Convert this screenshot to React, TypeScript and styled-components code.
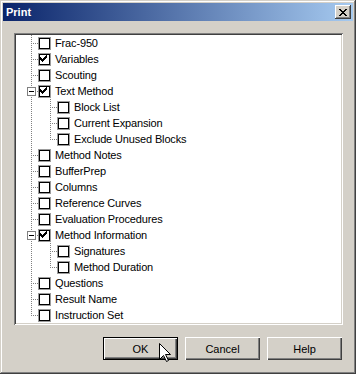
import React from "react";
import styled, { createGlobalStyle } from "styled-components";

const Global = createGlobalStyle`
  html, body { margin: 0; padding: 0; background: #d4d0c8; }
  body { font-family: "Liberation Sans", Arial, sans-serif; font-size: 11px; }
  * { box-sizing: border-box; }
`;

const FACE = "#d4d0c8";

const Window = styled.div`
  width: 356px;
  height: 374px;
  padding: 3px;
  background: ${FACE};
  display: flex;
  flex-direction: column;
  box-shadow: inset -1px -1px #404040, inset 1px 1px ${FACE},
    inset -2px -2px #808080, inset 2px 2px #ffffff;
`;

const TitleBar = styled.div`
  height: 18px;
  flex: none;
  display: flex;
  align-items: center;
  justify-content: space-between;
  padding: 0 2px 0 2px;
  background: linear-gradient(to right, #0a246a, #a6caf0);
`;

const Title = styled.span`
  color: #ffffff;
  font-weight: bold;
  font-size: 11px;
  font-family: "Liberation Sans", Arial, sans-serif;
  line-height: 18px;
  padding-left: 1px;
`;

const CloseButton = styled.div`
  width: 16px;
  height: 14px;
  background: ${FACE};
  display: flex;
  align-items: center;
  justify-content: center;
  box-shadow: inset -1px -1px #404040, inset 1px 1px #ffffff,
    inset -2px -2px #808080;
`;

const Body = styled.div`
  flex: 1;
  display: flex;
  flex-direction: column;
  padding: 12px 10px 11px 11px;
`;

const TreePanel = styled.div`
  height: 292px;
  flex: none;
  background: #ffffff;
  padding: 2px;
  box-shadow: inset 1px 1px #808080, inset -1px -1px #ffffff,
    inset 2px 2px #404040, inset -2px -2px ${FACE};
`;

const TreeList = styled.div`
  display: flex;
  flex-direction: column;
  padding-left: 3px;
`;

const Row = styled.div`
  display: flex;
  align-items: center;
  height: 16px;
`;

const Connector = styled.div<{ $top: boolean; $bottom: boolean; $branch: boolean }>`
  position: relative;
  width: 19px;
  height: 16px;
  flex: none;

  &::before {
    content: "";
    display: ${(p) => (p.$top || p.$bottom ? "block" : "none")};
    position: absolute;
    left: 12px;
    width: 1px;
    top: ${(p) => (p.$top ? "0" : "8px")};
    bottom: ${(p) => (p.$bottom ? "0" : "7px")};
    background-image: linear-gradient(to bottom, #808080 50%, transparent 50%);
    background-size: 1px 2px;
  }

  &::after {
    content: "";
    display: ${(p) => (p.$branch ? "block" : "none")};
    position: absolute;
    left: 12px;
    width: 7px;
    top: 8px;
    height: 1px;
    background-image: linear-gradient(to right, #808080 50%, transparent 50%);
    background-size: 2px 1px;
  }
`;

const Expander = styled.div`
  position: absolute;
  left: 8px;
  top: 4px;
  width: 9px;
  height: 9px;
  border: 1px solid #808080;
  background: #ffffff;
  z-index: 1;
  display: flex;
  align-items: center;
  justify-content: center;

  &::after {
    content: "";
    width: 5px;
    height: 1px;
    background: #000000;
  }
`;

const Box = styled.div`
  width: 13px;
  height: 13px;
  flex: none;
  border: 1px solid #9c9c9c;
  box-shadow: inset 0 0 0 1px #000000;
  background: #ffffff;
  display: flex;
`;

const Label = styled.span`
  margin-left: 4px;
  line-height: 16px;
  color: #000000;
  white-space: nowrap;
  font-size: 11px;
  letter-spacing: -0.15px;
`;

const ButtonRow = styled.div`
  display: flex;
  justify-content: flex-end;
  gap: 7px;
  margin-top: 12px;
  padding-right: 1px;
`;

const Button = styled.div<{ $default?: boolean }>`
  position: relative;
  width: 75px;
  height: 23px;
  display: flex;
  align-items: center;
  justify-content: center;
  background: ${FACE};
  color: #000000;
  font-size: 11px;
  border: ${(p) => (p.$default ? "1px solid #000000" : "none")};
  box-shadow: inset 1px 1px #ffffff, inset -1px -1px #404040,
    inset -2px -2px #808080;
`;

const Cursor = styled.svg`
  position: absolute;
  left: 55px;
  top: 5px;
  width: 13px;
  height: 20px;
  z-index: 2;
`;

const CHECK_PATH =
  "M8 2h1v1h-1z M7 3h2v1h-2z M2 4h1v1h-1z M6 4h3v1h-3z M2 5h2v1h-2z M5 5h3v1h-3z M2 6h5v1h-5z M3 7h3v1h-3z M4 8h1v1h-1z";

const CheckBox: React.FC<{ checked?: boolean }> = ({ checked }) => (
  <Box>
    {checked && (
      <svg width="11" height="11" viewBox="0 0 11 11" shapeRendering="crispEdges">
        <path d={CHECK_PATH} fill="#000" transform="translate(-1,-1)" />
      </svg>
    )}
  </Box>
);

type Item = { label: string; checked?: boolean; children?: { label: string; checked?: boolean }[] };

const ITEMS: Item[] = [
  { label: "Frac-950" },
  { label: "Variables", checked: true },
  { label: "Scouting" },
  {
    label: "Text Method",
    checked: true,
    children: [{ label: "Block List" }, { label: "Current Expansion" }, { label: "Exclude Unused Blocks" }],
  },
  { label: "Method Notes" },
  { label: "BufferPrep" },
  { label: "Columns" },
  { label: "Reference Curves" },
  { label: "Evaluation Procedures" },
  {
    label: "Method Information",
    checked: true,
    children: [{ label: "Signatures" }, { label: "Method Duration" }],
  },
  { label: "Questions" },
  { label: "Result Name" },
  { label: "Instruction Set" },
];

export default function App() {
  const rows: React.ReactNode[] = [];
  ITEMS.forEach((item, i) => {
    const lastRoot = i === ITEMS.length - 1;
    rows.push(
      <Row key={item.label}>
        <Connector $top $bottom={!lastRoot} $branch>
          {item.children && <Expander />}
        </Connector>
        <CheckBox checked={item.checked} />
        <Label>{item.label}</Label>
      </Row>
    );
    item.children?.forEach((child, j) => {
      const lastChild = j === item.children!.length - 1;
      rows.push(
        <Row key={item.label + child.label}>
          <Connector $top={!lastRoot} $bottom={!lastRoot} $branch={false} />
          <Connector $top $bottom={!lastChild} $branch />
          <CheckBox checked={child.checked} />
          <Label>{child.label}</Label>
        </Row>
      );
    });
  });

  return (
    <>
      <Global />
      <Window>
        <TitleBar>
          <Title>Print</Title>
          <CloseButton>
            <svg width="8" height="7" viewBox="0 0 8 7" shapeRendering="crispEdges">
              <path
                d="M0 0h2v1h-2z M6 0h2v1h-2z M1 1h2v1h-2z M5 1h2v1h-2z M2 2h4v1h-4z M3 3h2v1h-2z M2 4h4v1h-4z M1 5h2v1h-2z M5 5h2v1h-2z M0 6h2v1h-2z M6 6h2v1h-2z"
                fill="#000"
              />
            </svg>
          </CloseButton>
        </TitleBar>
        <Body>
          <TreePanel>
            <TreeList>{rows}</TreeList>
          </TreePanel>
          <ButtonRow>
            <Button $default>
              OK
              <Cursor viewBox="0 0 13 20">
                <path
                  d="M0.5 0.5 L0.5 16.5 L4.5 12.5 L7.5 18.5 L9.5 17.5 L6.5 11.5 L11.5 11.5 Z"
                  fill="#fff"
                  stroke="#000"
                  strokeWidth="1"
                  strokeLinejoin="miter"
                />
              </Cursor>
            </Button>
            <Button>Cancel</Button>
            <Button>Help</Button>
          </ButtonRow>
        </Body>
      </Window>
    </>
  );
}
